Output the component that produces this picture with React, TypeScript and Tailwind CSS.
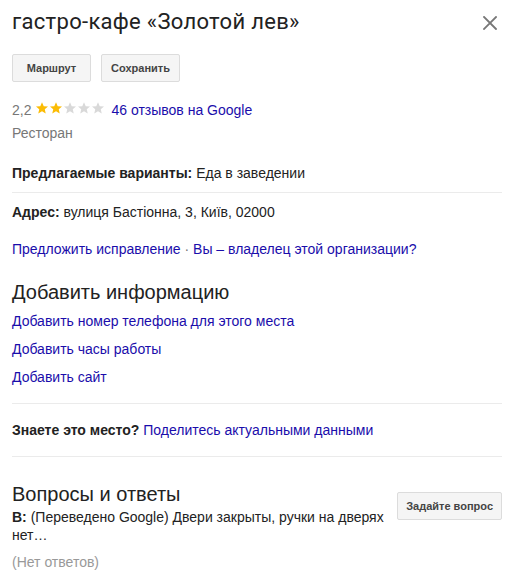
const LINK = 'text-[#1a0dab]'

function Stars({ value }: { value: number }) {
  // five small stars, filled up to the rounded rating
  const filled = Math.round(value)
  return (
    <span className="inline-flex items-center">
      {[0, 1, 2, 3, 4].map((i) => (
        <svg key={i} width="14" height="14" viewBox="0 0 24 24">
          <path
            d="M12 2l2.95 6.8 7.35.65-5.55 4.85 1.65 7.2L12 17.7l-6.4 3.8 1.65-7.2L1.7 9.45l7.35-.65z"
            fill={i < filled ? '#fbbc05' : '#d9d9d9'}
          />
        </svg>
      ))}
    </span>
  )
}

function CloseIcon() {
  return (
    <svg width="14" height="14" viewBox="0 0 14 14" className="mr-[5px] mt-[2px]">
      <path d="M1 1l12 12M13 1L1 13" stroke="#777" strokeWidth="1.8" strokeLinecap="square" />
    </svg>
  )
}

function Divider() {
  return <div className="h-px bg-[#ebebeb]" />
}

function GrayButton({ children, wide }: { children: React.ReactNode; wide?: boolean }) {
  return (
    <button
      className={`h-[28px] rounded-[2px] border border-[#dcdcdc] bg-[#f5f5f5] text-[11px] font-bold text-[#444] ${
        wide ? 'px-[8px]' : 'min-w-[79px] px-[9px]'
      }`}
    >
      {children}
    </button>
  )
}

export default function App() {
  return (
    <div
      className="w-[516px] min-h-[573px] bg-white pl-3 pr-[14px] pt-[8px] text-[14px] leading-[20px] text-[#222]"
      style={{ fontFamily: '"Liberation Sans", Arial, sans-serif' }}
    >
      <div className="flex items-center justify-between">
        <h1
          className="text-[22px] leading-[28px] tracking-[0.3px] text-[#222]"
          style={{ fontFamily: 'Roboto, sans-serif' }}
        >
          гастро-кафе «Золотой лев»
        </h1>
        <CloseIcon />
      </div>

      <div className="mt-[18px] flex gap-[10px]">
        <GrayButton>Маршрут</GrayButton>
        <GrayButton>Сохранить</GrayButton>
      </div>

      <div className="mt-[18px] flex items-center">
        <span className="text-[#777]">2,2</span>
        <span className="ml-[4px]">
          <Stars value={2.2} />
        </span>
        <a className={`${LINK} ml-[6px]`}>46 отзывов на Google</a>
      </div>
      <div className="mt-[3px] text-[#777]">Ресторан</div>

      <div className="mt-[20px]">
        <span className="font-bold">Предлагаемые варианты:</span> Еда в заведении
      </div>
      <div className="mt-[9px]">
        <Divider />
      </div>
      <div className="mt-[9px]">
        <span className="font-bold">Адрес:</span> вулиця Бастіонна, 3, Київ, 02000
      </div>

      <div className="mt-[17px]">
        <a className={LINK}>Предложить исправление</a>
        <span className="text-[#777]"> · </span>
        <a className={LINK}>Вы – владелец этой организации?</a>
      </div>

      <h2 className="mt-[19px] text-[20px] leading-[28px] text-[#222]">Добавить информацию</h2>
      <div className="mt-[5px] flex flex-col items-start gap-[8px]">
        <a className={LINK}>Добавить номер телефона для этого места</a>
        <a className={LINK}>Добавить часы работы</a>
        <a className={LINK}>Добавить сайт</a>
      </div>

      <div className="mt-[16px]">
        <Divider />
      </div>
      <div className="mt-[16px]">
        <span className="font-bold">Знаете это место?</span> <a className={LINK}>Поделитесь актуальными данными</a>
      </div>
      <div className="mt-[16px]">
        <Divider />
      </div>

      <div className="mt-[23px] flex items-start justify-between gap-[4px]">
        <div className="flex-1">
          <h2 className="text-[20px] leading-[28px] text-[#222]">Вопросы и ответы</h2>
          <p className="leading-[18px]">
            <span className="font-bold">В:</span> (Переведено Google) Двери закрыты, ручки на дверях нет…
          </p>
          <p className="mt-[8px] text-[#999]">(Нет ответов)</p>
        </div>
        <div className="mt-[12px]">
          <GrayButton wide>Задайте вопрос</GrayButton>
        </div>
      </div>
    </div>
  )
}
